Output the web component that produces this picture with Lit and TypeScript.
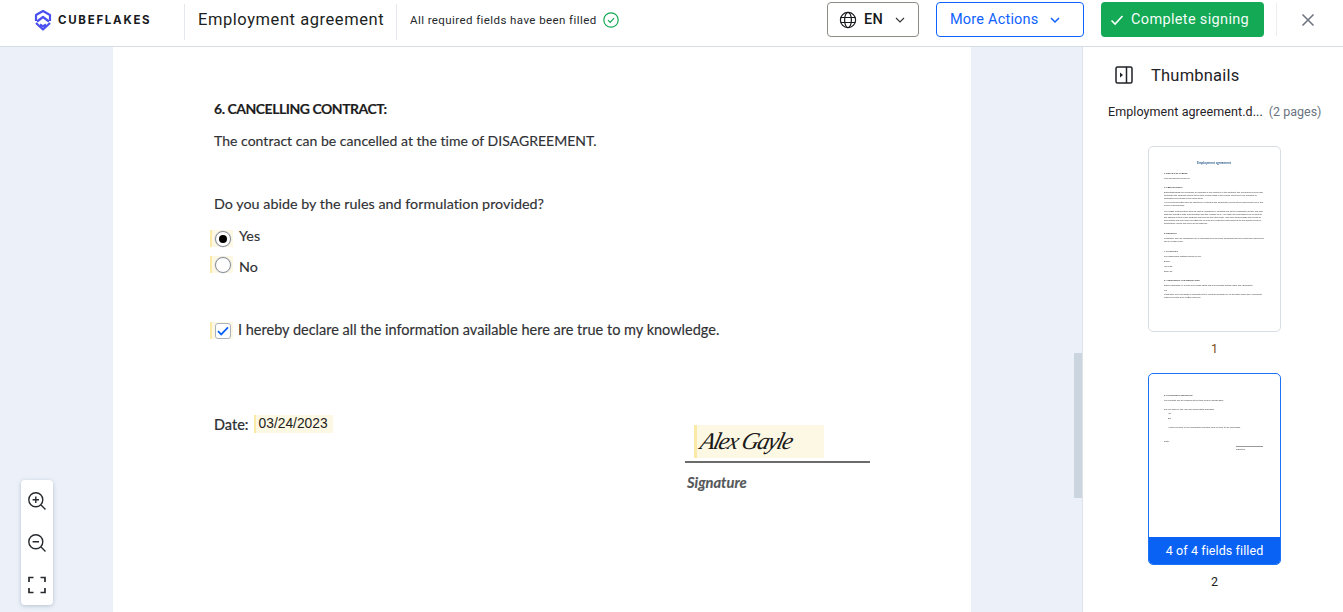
import { LitElement, html, css } from "lit";
import { customElement } from "lit/decorators.js";

type Line = [string, string, number];

const thumb1: Line[] = [
  ["t", "Employment agreement", 15],
  ["h", "1. DETAILS OF PARTIES", 7],
  ["l", "This agreement is made on ______________________", 2],
  ["h", "2. PREPARATIONS", 6],
  ["l", "Notwithstanding any provisions or language in the contract, or this contract, the Contractor/Owner may terminate this contract subject to the time frames listed in this clause when there are breaches of contractual provisions by the other party.", 2],
  ["l", "Any such termination shall be effected by writing to the Contractor/Owner at the address set out in this clause of termination.", 1],
  ["l", "The notice of termination shall be sent by registered or certified mail to the Contractor/Owner and shall state the effective date of termination and the reasons for it. Any notice of termination shall be sent to the address set out in the contract and given to the other party, who shall acknowledge the receipt of such notice and shall then be entitled to all sums due under this agreement up to the effective date of termination, and to the return of its materials.", 3],
  ["h", "3. DEPOSITS", 7],
  ["l", "Contractor shall be responsible for all expenses incurred while performing services under this agreement and all related work.", 2],
  ["h", "4. PAYMENTS", 7],
  ["l", "The responsible contact person for job:", 2],
  ["f", "Name: ___________________________", 2],
  ["f", "Job Title: _________________________", 2],
  ["f", "Email ID: _________________________", 2],
  ["h", "5. ASSIGNMENT AND DELEGATION", 6],
  ["l", "Either Contractor or Owner may assign rights and may delegate duties under this Agreement.", 2],
  ["l", "OR", 2],
  ["l", "Contractor may not assign or subcontract any rights or delegate any of its duties under this Agreement without Client's prior written approval.", 1],
];

const thumb2: Line[] = [
  ["h", "6. CANCELLING CONTRACT:", 20],
  ["l", "The contract can be cancelled at the time of DISAGREEMENT.", 1.5],
  ["l", "Do you abide by the rules and formulation provided?", 6],
  ["i", "Yes", 1.5],
  ["i", "No", 2],
  ["i", "I hereby declare all the information available here are true to my knowledge.", 6],
  ["l", "Date:", 11],
];

@customElement("app-root")
export class AppRoot extends LitElement {
  static styles = css`
    :host { display: block; width: 1343px; height: 612px; overflow: hidden; font-family: Roboto, sans-serif; color: #1a1d21; background: #fff; }
    * { box-sizing: border-box; }
    header { height: 47px; border-bottom: 1px solid #d5dde5; display: flex; align-items: center; padding: 0 0 7px 33px; }
    header > * { flex: none; }
    .logo { display: flex; align-items: center; gap: 5px; width: 151px; margin-top: 1px; }
    .brand { font-family: Inter, Roboto, sans-serif; font-weight: 700; font-size: 11.5px; letter-spacing: 1.72px; color: #17191c; }
    .vr { width: 1px; height: 36px; background: #e4e7eb; margin-top: 5px; }
    .title { font-size: 16.5px; letter-spacing: .56px; width: 211px; padding-left: 13px; white-space: nowrap; color: #1c1f23; }
    .status { display: flex; align-items: center; gap: 6px; font-size: 11.5px; letter-spacing: .42px; padding-left: 13px; width: 430px; color: #25282c; white-space: nowrap; }
    .btn { height: 35px; border-radius: 4px; display: flex; align-items: center; font-size: 15px; letter-spacing: .2px; white-space: nowrap; }
    .lang { width: 92px; border: 1px solid #8c8c86; padding-left: 12px; gap: 7px; font-weight: 500; font-size: 14.5px; color: #17191c; }
    .lang svg:first-child { margin-left: -1px; }
    .more { width: 148px; margin-left: 17px; border: 1px solid #0f62fe; color: #0f62fe; padding-left: 13px; gap: 11px; font-size: 14.5px; }
    .done { width: 163px; margin-left: 17px; background: #13a955; color: #f2fbf5; padding-left: 9px; gap: 7px; font-size: 14.5px; letter-spacing: .34px; }
    .vr2 { height: 33px; margin: 0 0 0 12px; background: #eceef1; }
    .close { margin: 0 0 0 24px; display: flex; }
    .body { display: flex; height: 565px; }
    main { position: relative; width: 1082px; background: #ecf1f9; overflow: hidden; }
    .page { width: 858px; height: 565px; margin-left: 113px; background: #fff; padding: 53px 0 0 101px; font-family: Lato, sans-serif; font-size: 14px; color: #303134; position: relative; -webkit-text-stroke: .15px currentColor; }
    .page h2 { margin: 0; font-size: 14px; line-height: 18px; font-weight: 700; color: #1c1d20; letter-spacing: -.47px; }
    .page p { margin: 0; line-height: 18px; }
    .p1 { margin-top: 14px !important; letter-spacing: .03px; }
    .p2 { margin-top: 45px !important; font-size: 14.3px; letter-spacing: .03px; }
    .opts { display: flex; flex-direction: column; margin-top: 14px; margin-left: -4px; font-size: 14.3px; }
    .opt { display: flex; align-items: flex-start; height: 29px; gap: 6px; }
    .opt + .opt { height: 20px; }
    .opt span { line-height: 18px; }
    .field { flex: none; width: 23px; height: 17px; background: #fdf8e3; border-left: 2px solid #fbe9a8; display: flex; align-items: center; justify-content: center; }
    .radio { flex: none; width: 16px; height: 16px; border-radius: 50%; border: 1px solid #8a8f98; background: #fff; display: flex; align-items: center; justify-content: center; box-shadow: 0 0 0 .5px #d5d8dd; }
    .radio.on::after { content: ""; width: 8px; height: 8px; border-radius: 50%; background: #000; }
    .y { margin-top: 3px; }
    .n { margin-top: 2px; }
    .decl { display: flex; align-items: center; gap: 5px; margin-top: 46px; margin-left: -4px; height: 17px; font-size: 14.5px; }
    .decl span { margin-bottom: 2px; }
    .box { width: 16px; height: 16px; border: 1px solid #aab2bb; border-radius: 3px; background: #fff; display: flex; align-items: center; justify-content: center; }
    .date { display: flex; align-items: center; gap: 5px; margin-top: 76px; height: 18px; font-size: 14.5px; font-weight: 500; }
    .dv { font-family: "Liberation Sans", sans-serif; font-size: 13.8px; color: #222; background: #fdf8e3; border-left: 2px solid #fbe9a8; padding: 0 5px 0 3px; height: 18px; line-height: 18px; -webkit-text-stroke: 0; }
    .sigwrap { position: absolute; left: 572px; top: 378px; width: 185px; }
    .sig { margin-left: 9px; width: 130px; height: 33px; background: #fdf8e3; border-left: 3px solid #fbe9a8; padding-left: 4px; color: #1a1a1a; -webkit-text-stroke: 0; overflow: hidden; }
    .sig span { display: inline-block; font-family: "Liberation Serif", serif; font-style: italic; font-size: 24px; line-height: 32px; white-space: nowrap; letter-spacing: -1.5px; transform: skewX(-14deg); }
    .rule { height: 2px; margin-top: 3px; background: #6b6b6b; }
    .siglabel { margin-top: 10px; margin-left: 2px; font-style: italic; font-weight: 700; font-size: 14.7px; color: #55575a; line-height: 18px; }
    .zoom { position: absolute; left: 21px; top: 433px; width: 32px; height: 125px; background: #fff; border-radius: 4px; box-shadow: 0 1px 4px rgba(60,80,110,.3); display: flex; flex-direction: column; align-items: center; padding-top: 11px; gap: 22px; }
    .zoom svg { display: block; }
    .sb { position: absolute; left: 1074px; top: 306px; width: 8px; height: 145px; background: #cad5e0; }
    aside { width: 261px; border-left: 1px solid #dfe2e6; background: #fff; position: relative; padding-top: 18px; }
    .ah { display: flex; align-items: center; gap: 18px; padding-left: 32px; height: 20px; font-size: 16.5px; letter-spacing: .2px; color: #1f2226; }
    .fn { display: flex; align-items: center; gap: 6px; margin-top: 18px; padding-left: 25px; font-size: 12.5px; height: 16px; white-space: nowrap; color: #1f2226; letter-spacing: .08px; }
    .fn span { color: #6b7480; letter-spacing: 0; }
    .th { width: 133px; margin: 27px 0 0 65px; border: 1px solid #d8dde3; border-radius: 5px; background: #fff; overflow: hidden; height: 186px; padding: 0 16px 0 15px; font-family: Lato, sans-serif; font-size: 2.2px; line-height: 3px; color: #444; }
    .blur { filter: blur(.25px); }
    .th2 { margin-top: 16px; height: 192px; border-color: #1a73f5; padding: 0; display: flex; flex-direction: column; }
    .th2 .in { flex: 1; padding: 0 15px; }
    .bar { height: 27px; background: #0a62f5; color: #fff; font-family: Roboto, sans-serif; font-size: 12.5px; line-height: 27px; text-align: center; letter-spacing: .1px; }
    .n1, .n2 { text-align: center; margin-left: 65px; width: 133px; font-size: 12.5px; line-height: 16px; }
    .n1 { margin-top: 9px; color: #7a4a14; }
    .n2 { margin-top: 9px; color: #222; }
    .tt { text-align: center; color: #2f5f8e; font-size: 3.2px; font-weight: 700; }
    .hh { color: #222; font-weight: 700; }
    .ff { white-space: nowrap; }
    .ii { padding-left: 4px; }
    .sg { margin: 3px 0 0 72px; border-top: .6px solid #999; width: 27px; }
    .sgl { margin: 1px 0 0 72px; }
  `;

  private line([k, t, m]: Line) {
    const cls = k === "t" ? "tt" : k === "h" ? "hh" : k === "i" ? "ii" : k === "f" ? "ff" : "";
    return html`<div class=${cls} style="margin-top:${m}px">${t}</div>`;
  }

  render() {
    return html`
      <header>
        <div class="logo">
          <svg width="20" height="22" viewBox="0 0 20 22" fill="none" stroke="#4a4ff0" stroke-width="2.2" stroke-linejoin="round">
            <path d="M3 12V6l7-4 7 4v6"/><path d="M4 12.500l6-4.500 6 4.500"/><path d="M3 14l7 6.500 7-6.500"/><path d="M7 15.500l3 2 3-2"/>
          </svg>
          <span class="brand">CUBEFLAKES</span>
        </div>
        <div class="vr"></div>
        <div class="title">Employment agreement</div>
        <div class="vr"></div>
        <div class="status">All required fields have been filled
          <svg width="16" height="16" viewBox="0 0 16 16" fill="none" stroke="#13a955" stroke-width="1.2"><circle cx="8" cy="8" r="7.200"/><path d="M5 8.200l2.200 2.200L11 6.200"/></svg>
        </div>
        <div class="btn lang">
          <svg width="18" height="18" viewBox="0 0 18 18" fill="none" stroke="#17191c" stroke-width="1.2"><circle cx="9" cy="9" r="7.600"/><ellipse cx="9" cy="9" rx="3.400" ry="7.600"/><path d="M1.600 6.500h14.800M1.600 11.500h14.800"/></svg>
          <span>EN</span>
          <svg style="margin-left:4px" width="12" height="8" viewBox="0 0 12 8" fill="none" stroke="#333" stroke-width="1.1"><path d="M2 2l4 4 4-4"/></svg>
        </div>
        <div class="btn more">More Actions
          <svg width="12" height="8" viewBox="0 0 12 8" fill="none" stroke="#0f62fe" stroke-width="1.5"><path d="M2 2l4 4 4-4"/></svg>
        </div>
        <div class="btn done">
          <svg width="14" height="12" viewBox="0 0 14 12" fill="none" stroke="#fff" stroke-width="1.6"><path d="M1.500 6.500l3.600 3.600L12.500 2"/></svg>
          Complete signing
        </div>
        <div class="vr vr2"></div>
        <div class="close">
          <svg width="14" height="14" viewBox="0 0 14 14" fill="none" stroke="#6f7680" stroke-width="1.6"><path d="M1.500 1.500l11 11M12.500 1.500l-11 11"/></svg>
        </div>
      </header>
      <div class="body">
        <main>
          <div class="page">
            <h2>6. CANCELLING CONTRACT:</h2>
            <p class="p1">The contract can be cancelled at the time of DISAGREEMENT.</p>
            <p class="p2">Do you abide by the rules and formulation provided?</p>
            <div class="opts">
              <div class="opt"><div class="field y"><div class="radio on"></div></div><span>Yes</span></div>
              <div class="opt"><div class="field"><div class="radio"></div></div><span class="n">No</span></div>
            </div>
            <div class="decl">
              <div class="field"><div class="box">
                <svg width="12" height="10" viewBox="0 0 12 10" fill="none" stroke="#0a62f5" stroke-width="1.8"><path d="M1 5.200l3.200 3.200L11 1.400"/></svg>
              </div></div>
              <span>I hereby declare all the information available here are true to my knowledge.</span>
            </div>
            <div class="date"><span>Date:</span><span class="dv">03/24/2023</span></div>
            <div class="sigwrap">
              <div class="sig"><span>Alex Gayle</span></div>
              <div class="rule"></div>
              <div class="siglabel">Signature</div>
            </div>
          </div>
          <div class="sb"></div>
          <div class="zoom">
            <svg width="20" height="20" viewBox="0 0 20 20" fill="none" stroke="#26292d" stroke-width="1.4"><circle cx="8.800" cy="8.800" r="7"/><path d="M14 14l4.500 4.500M5.600 8.800h6.400M8.800 5.600v6.400"/></svg>
            <svg width="20" height="20" viewBox="0 0 20 20" fill="none" stroke="#26292d" stroke-width="1.4"><circle cx="8.800" cy="8.800" r="7"/><path d="M14 14l4.500 4.500M5.600 8.800h6.400"/></svg>
            <svg width="20" height="20" viewBox="0 0 20 20" fill="none" stroke="#26292d" stroke-width="1.7"><path d="M2 7V2.500h4.500M13.500 2.500H18V7M18 13v4.500h-4.500M6.500 17.500H2V13"/></svg>
          </div>
        </main>
        <aside>
          <div class="ah">
            <svg width="18" height="18" viewBox="0 0 18 18" fill="none" stroke="#1f2226" stroke-width="1.5"><rect x="1" y="1" width="16" height="16" rx="1.500"/><path d="M11.500 1v16"/><path d="M5 6.500l3 2.500-3 2.500z" fill="#1f2226" stroke="none"/></svg>
            <span>Thumbnails</span>
          </div>
          <div class="fn">Employment agreement.d... <span>(2 pages)</span></div>
          <div class="th"><div class="blur">${thumb1.map((l) => this.line(l))}</div></div>
          <div class="n1">1</div>
          <div class="th th2">
            <div class="in blur">
              ${thumb2.map((l) => this.line(l))}
              <div class="sg"></div>
              <div class="sgl">Signature</div>
            </div>
            <div class="bar">4 of 4 fields filled</div>
          </div>
          <div class="n2">2</div>
        </aside>
      </div>
    `;
  }
}
